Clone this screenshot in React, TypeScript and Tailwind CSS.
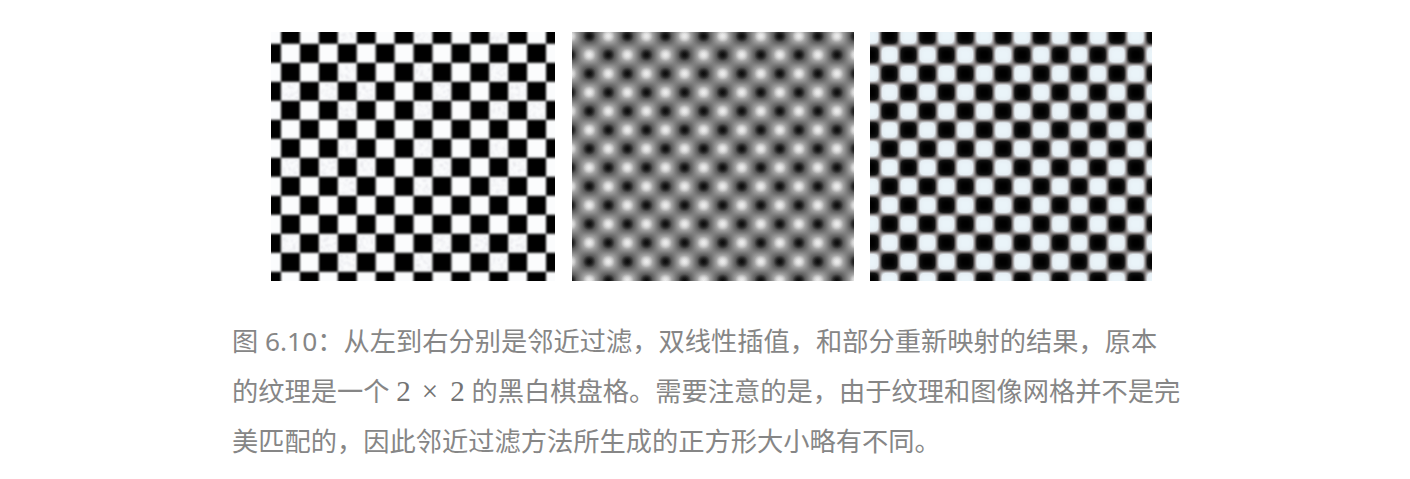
const speckled: [number, number[]][] = [
  [0, [245, 475, 700]],
  [2, [245, 475, 700]],
  [3, [75, 190, 300, 530, 760]],
  [4, [245, 475, 700, 815]],
  [6, [245, 475, 700]],
  [7, [75, 190, 300, 530, 760]],
  [8, [245, 475, 700]],
  [11, [75, 190, 300, 530, 645, 760]],
  [12, [245, 475, 700]],
];

function Nearest() {
  const cw = 18.93;
  const ch = 19;
  const x0 = 10;
  const y0 = -7.2;
  const cells: React.ReactElement[] = [];
  for (let r = -1; r < 15; r++) {
    for (let c = -1; c < 16; c++) {
      if ((r + c + 100) % 2 === 0) {
        cells.push(<rect key={`${r}-${c}`} x={x0 + c * cw} y={y0 + r * ch} width={cw + 0.02} height={ch + 0.02} fill="#000" />);
      }
    }
  }
  const patches: React.ReactElement[] = [];
  speckled.forEach(([r, xs]) =>
    xs.forEach((zx) => {
      const cx = 265 + zx / 3 - 271;
      patches.push(<rect key={`${r}-${zx}`} x={cx - 8} y={y0 + r * ch + 2} width={16} height={15} />);
    })
  );
  return (
    <svg width={284} height={249} viewBox="0 0 284 249" className="block shrink-0">
      <defs>
        <filter id="sharp" x="-5%" y="-5%" width="110%" height="110%" colorInterpolationFilters="sRGB">
          <feGaussianBlur stdDeviation={0.85} />
        </filter>
        <filter id="noise" x="0" y="0" width="100%" height="100%" colorInterpolationFilters="sRGB">
          <feTurbulence type="fractalNoise" baseFrequency="0.4" numOctaves="2" seed="4" />
          <feColorMatrix values="0 0 0 0 0.78  0 0 0 0 0.78  0 0 0 0 0.82  2.2 0 0 0 -1.1" />
          <feGaussianBlur stdDeviation={0.8} />
        </filter>
        <clipPath id="patches">{patches}</clipPath>
      </defs>
      <g filter="url(#sharp)">
        <rect x={-40} y={-40} width={364} height={330} fill="#fbfcfd" />
        {cells}
      </g>
      <g clipPath="url(#patches)">
        <rect width={284} height={249} filter="url(#noise)" />
      </g>
    </svg>
  );
}

const stopOffsets = Array.from({ length: 17 }, (_, i) => i / 16);

function gray(t: number) {
  const v = 0.5 - 0.5 * Math.cos(2 * Math.PI * t);
  const g = Math.round(v * 255);
  return `rgb(${g},${g},${g})`;
}

function Bilinear() {
  const cw = 19.05;
  const ch = 18.8;
  const xc = 17.3;
  const yc = 4;
  const kx = Math.PI / cw;
  const ky = Math.PI / ch;
  const k2 = kx * kx + ky * ky;
  const sx = (kx * 2 * Math.PI) / k2;
  const sy = (ky * 2 * Math.PI) / k2;
  const stops = stopOffsets.map((t) => <stop key={t} offset={t} stopColor={gray(t)} />);
  return (
    <svg width={282} height={249} viewBox="0 0 282 249" className="block shrink-0">
      <defs>
        <linearGradient id="ga" gradientUnits="userSpaceOnUse" spreadMethod="repeat" x1={xc} y1={yc} x2={xc + sx} y2={yc + sy}>
          {stops}
        </linearGradient>
        <linearGradient id="gb" gradientUnits="userSpaceOnUse" spreadMethod="repeat" x1={xc} y1={yc} x2={xc + sx} y2={yc - sy}>
          {stops}
        </linearGradient>
        <filter id="tone" x="0" y="0" width="100%" height="100%" colorInterpolationFilters="sRGB">
          <feComponentTransfer>
            <feFuncR type="table" tableValues="0.05 0.36 0.5 0.64 0.93" />
            <feFuncG type="table" tableValues="0.05 0.36 0.5 0.64 0.93" />
            <feFuncB type="table" tableValues="0.05 0.36 0.5 0.64 0.93" />
          </feComponentTransfer>
        </filter>
      </defs>
      <g filter="url(#tone)">
        <rect width={282} height={249} fill="url(#ga)" />
        <rect width={282} height={249} fill="url(#gb)" opacity={0.5} />
      </g>
    </svg>
  );
}

function Remapped() {
  const cw = 18.95;
  const ch = 18.8;
  const x0 = 10;
  const y0 = -5.4;
  const cells: React.ReactElement[] = [];
  for (let r = -2; r < 17; r++) {
    for (let c = -2; c < 18; c++) {
      if ((r + c + 100) % 2 === 0) {
        cells.push(<rect key={`${r}-${c}`} x={x0 + c * cw} y={y0 + r * ch} width={cw + 0.02} height={ch + 0.02} fill="#000" />);
      }
    }
  }
  return (
    <svg width={282} height={249} viewBox="0 0 282 249" className="block shrink-0">
      <defs>
        <filter id="soft" x="-5%" y="-5%" width="110%" height="110%" colorInterpolationFilters="sRGB">
          <feGaussianBlur stdDeviation={3} />
          <feComponentTransfer>
            <feFuncR type="table" tableValues="0 0.08 0.54 0.9 0.92" />
            <feFuncG type="table" tableValues="0 0.08 0.52 0.93 0.96" />
            <feFuncB type="table" tableValues="0 0.08 0.52 0.95 0.98" />
          </feComponentTransfer>
        </filter>
      </defs>
      <g filter="url(#soft)">
        <rect x={-40} y={-40} width={362} height={330} fill="#fff" />
        {cells}
      </g>
    </svg>
  );
}

const mathClass = "font-['Liberation_Serif',serif] text-[29px] leading-none text-[#737373]";

export default function App() {
  return (
    <div className="h-[479px] w-[1410px] overflow-hidden bg-white pt-8 font-['Noto_Sans','Noto_Sans_CJK_SC',sans-serif]">
      <div className="ml-[271px] flex h-[249px] w-[881px] justify-between">
        <Nearest />
        <Bilinear />
        <Remapped />
      </div>
      <p className="ml-[232px] mt-[35px] w-[950px] text-[26.25px] leading-[50px] text-[#868686]">
        图 6.10：从左到右分别是邻近过滤，双线性插值，和部分重新映射的结果，原本的纹理是一个{" "}
        <span className={mathClass}>2</span>
        <span className={`${mathClass} ml-[11px] mr-[12px]`}>×</span>
        <span className={mathClass}>2</span>{" "}
        的黑白棋盘格。需要注意的是，由于纹理和图像网格并不是完美匹配的，因此邻近过滤方法所生成的正方形大小略有不同。
      </p>
    </div>
  );
}
